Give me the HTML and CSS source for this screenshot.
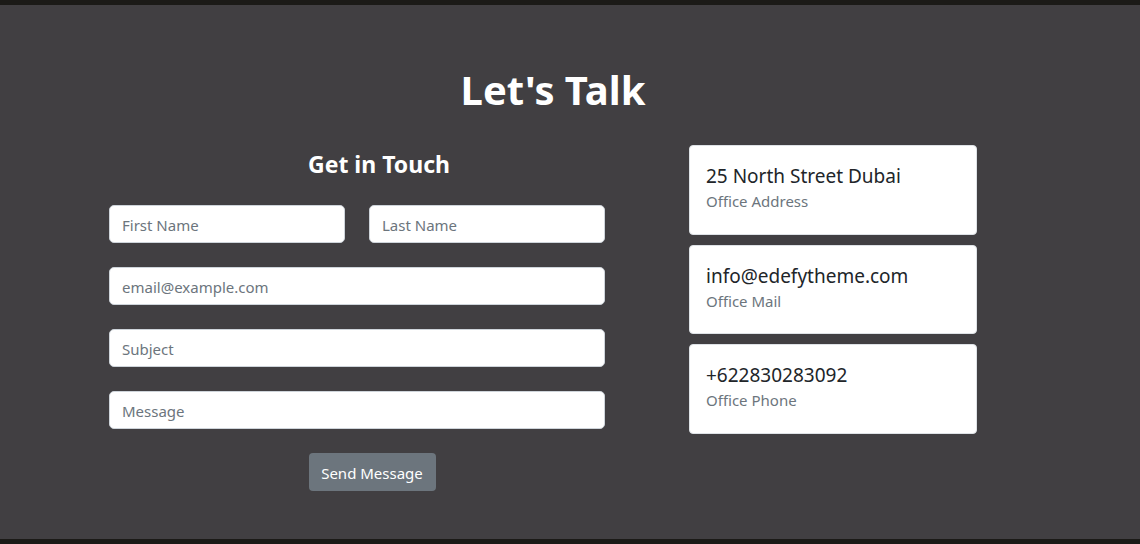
FILE: index.html
```html
<!DOCTYPE html>
<html lang="en">
<head>
<meta charset="utf-8">
<title>Let's Talk</title>
<link rel="stylesheet" href="styles.css">
</head>
<body>
<section class="contact">
  <div class="inner">
    <h1 class="title">Let's Talk</h1>
    <div class="row">
      <div class="form-col">
        <h2 class="subtitle">Get in Touch</h2>
        <form class="form">
          <div class="pair">
            <input class="field" type="text" placeholder="First Name">
            <input class="field" type="text" placeholder="Last Name">
          </div>
          <input class="field" type="email" placeholder="email@example.com">
          <input class="field" type="text" placeholder="Subject">
          <input class="field" type="text" placeholder="Message">
          <div class="actions">
            <button class="btn" type="button">Send Message</button>
          </div>
        </form>
      </div>
      <div class="info-col">
        <div class="card">
          <div class="card-main">25 North Street Dubai</div>
          <div class="card-sub">Office Address</div>
        </div>
        <div class="card">
          <div class="card-main">info@edefytheme.com</div>
          <div class="card-sub">Office Mail</div>
        </div>
        <div class="card">
          <div class="card-main">+622830283092</div>
          <div class="card-sub">Office Phone</div>
        </div>
      </div>
    </div>
  </div>
</section>
</body>
</html>
```

FILE: styles.css
```css
* { box-sizing: border-box; }
html, body { margin: 0; padding: 0; }
body {
  background: #1b1a17;
  font-family: "Noto Sans", "Open Sans", sans-serif;
  padding: 5px 0;
  height: 544px;
  overflow: hidden;
}
.contact {
  background: #413f42;
  height: 534px;
  padding-top: 61px;
}
.inner {
  width: 888px;
  margin-left: 109px;
}
.title {
  margin: 0 0 31px;
  font-size: 40px;
  line-height: 1.2;
  font-weight: 700;
  color: #fff;
  text-align: center;
}
.row {
  display: flex;
  gap: 40px;
}
.form-col {
  width: 540px;
  padding-top: 5px;
}
.subtitle {
  margin: 0 0 27px;
  font-size: 23px;
  line-height: 28px;
  font-weight: 700;
  color: #fff;
  text-align: center;
}
.form {
  width: 496px;
  display: flex;
  flex-direction: column;
  gap: 24px;
}
.pair {
  display: flex;
  gap: 24px;
}
.pair .field { flex: 1; min-width: 0; }
.field {
  height: 38px;
  border: 1px solid #ced4da;
  border-radius: 5px;
  background: #fff;
  padding: 7px 12px 5px;
  font-family: inherit;
  font-size: 15px;
  color: #495057;
  outline: none;
}
.field::placeholder { color: #6c757d; opacity: 1; }
.actions {
  display: flex;
  justify-content: center;
  padding-left: 30px;
}
.btn {
  height: 38px;
  width: 127px;
  border: 0;
  border-radius: 4px;
  background: #6c757d;
  color: #fff;
  font-family: inherit;
  font-size: 15px;
  padding: 2px 0 0;
}
.info-col {
  width: 288px;
  display: flex;
  flex-direction: column;
  gap: 10px;
}
.card {
  height: 89.5px;
  background: #fff;
  border: 1px solid #dee2e6;
  border-radius: 4px;
  padding: 18px 16px 0;
}
.card-main {
  font-size: 19px;
  line-height: 24px;
  color: #212529;
}
.card-sub {
  margin-top: 1px;
  font-size: 15px;
  line-height: 24px;
  color: #6c757d;
}
```
